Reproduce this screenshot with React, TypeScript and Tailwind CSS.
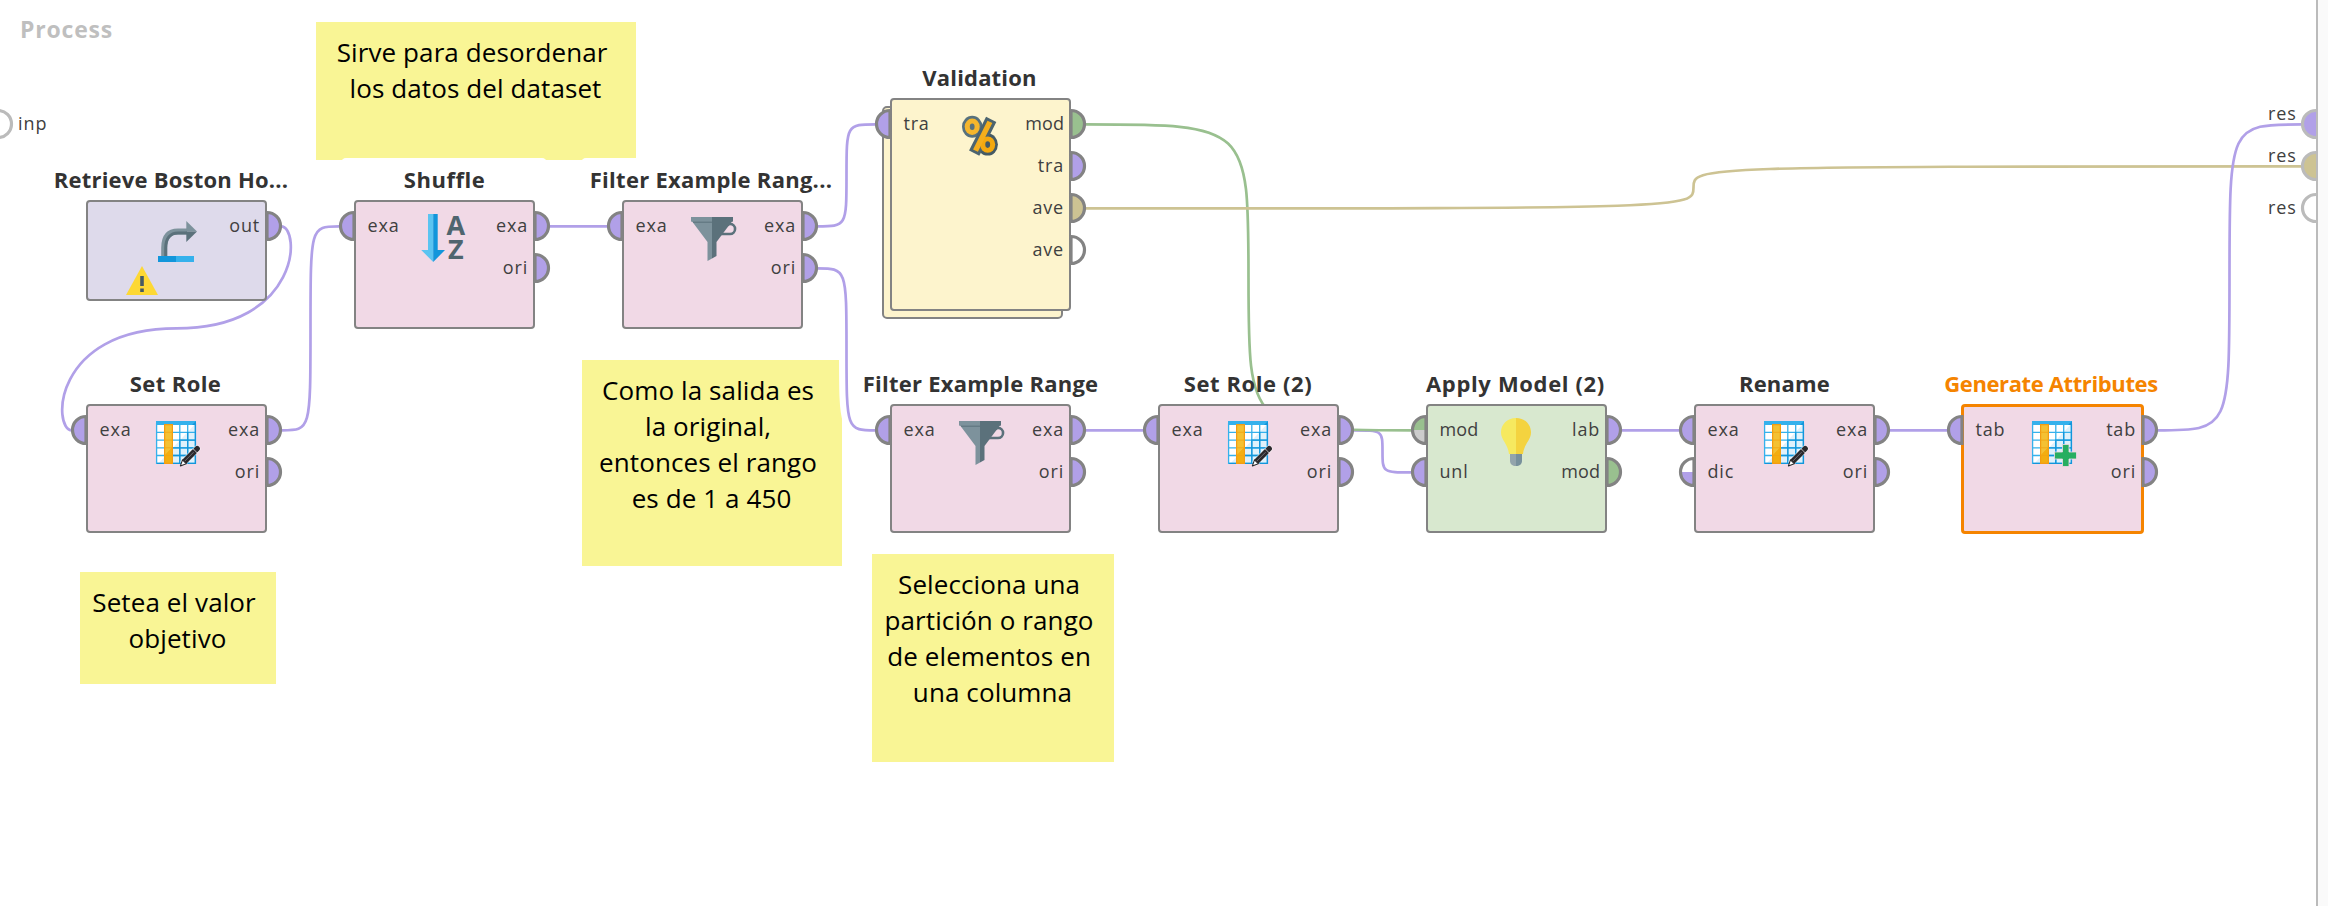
import React from "react";

type PortKind = "exa" | "mod" | "ave" | "none" | "modHalf" | "dicHalf";
type Port = { label: string; kind: PortKind };
type IconName = "retrieve" | "sort" | "funnel" | "percent" | "bulb" | "tableEdit" | "tableAdd";
type OperatorData = {
  title: string;
  titleShift: number;
  titleSpacing: number;
  x: number;
  y: number;
  height: number;
  fill: string;
  icon: IconName;
  inputs: Port[];
  outputs: Port[];
  selected?: boolean;
  stacked?: boolean;
};

const PURPLE = "#b1a0e8";
const GREEN = "#99c08f";
const KHAKI = "#cdc393";

const exa: Port = { label: "exa", kind: "exa" };
const ori: Port = { label: "ori", kind: "exa" };

const operators: OperatorData[] = [
  { title: "Retrieve Boston Ho...", titleShift: -5.5, titleSpacing: 0.22, x: 86, y: 200, height: 101, fill: "#dedaeb", icon: "retrieve", inputs: [], outputs: [{ label: "out", kind: "exa" }] },
  { title: "Shuffle", titleShift: 0, titleSpacing: 0.5, x: 354, y: 200, height: 129, fill: "#f1d9e6", icon: "sort", inputs: [exa], outputs: [exa, ori] },
  { title: "Filter Example Rang...", titleShift: -1.5, titleSpacing: 0.27, x: 622, y: 200, height: 129, fill: "#f1d9e6", icon: "funnel", inputs: [exa], outputs: [exa, ori] },
  { title: "Validation", titleShift: -1, titleSpacing: 0.17, x: 890, y: 98, height: 213, fill: "#fdf4cd", icon: "percent", inputs: [{ label: "tra", kind: "exa" }], outputs: [{ label: "mod", kind: "mod" }, { label: "tra", kind: "exa" }, { label: "ave", kind: "ave" }, { label: "ave", kind: "none" }], stacked: true },
  { title: "Set Role", titleShift: -1, titleSpacing: 0.4, x: 86, y: 404, height: 129, fill: "#f1d9e6", icon: "tableEdit", inputs: [exa], outputs: [exa, ori] },
  { title: "Filter Example Range", titleShift: 0, titleSpacing: 0.25, x: 890, y: 404, height: 129, fill: "#f1d9e6", icon: "funnel", inputs: [exa], outputs: [exa, ori] },
  { title: "Set Role (2)", titleShift: -0.5, titleSpacing: 0.6, x: 1158, y: 404, height: 129, fill: "#f1d9e6", icon: "tableEdit", inputs: [exa], outputs: [exa, ori] },
  { title: "Apply Model (2)", titleShift: -1, titleSpacing: 0.65, x: 1426, y: 404, height: 129, fill: "#d8e8cf", icon: "bulb", inputs: [{ label: "mod", kind: "modHalf" }, { label: "unl", kind: "exa" }], outputs: [{ label: "lab", kind: "exa" }, { label: "mod", kind: "mod" }] },
  { title: "Rename", titleShift: 0, titleSpacing: 0.2, x: 1694, y: 404, height: 129, fill: "#f1d9e6", icon: "tableEdit", inputs: [exa, { label: "dic", kind: "dicHalf" }], outputs: [exa, ori] },
  { title: "Generate Attributes", titleShift: -1.5, titleSpacing: -0.38, x: 1962, y: 404, height: 129, fill: "#f1d9e6", icon: "tableAdd", inputs: [{ label: "tab", kind: "exa" }], outputs: [{ label: "tab", kind: "exa" }, ori], selected: true },
];

const notes = [
  { x: 316, y: 22, w: 320, h: 138, lines: ["Sirve para desordenar ", "los datos del dataset"] },
  { x: 582, y: 360, w: 260, h: 206, lines: ["Como la salida es ", "la original, ", "entonces el rango ", "es de 1 a 450"] },
  { x: 80, y: 572, w: 196, h: 112, lines: ["Setea el valor ", "objetivo"] },
  { x: 872, y: 554, w: 242, h: 208, lines: ["Selecciona una ", "partición o rango ", "de elementos en ", "una columna"] },
];

function wire(x1: number, y1: number, x2: number, y2: number) {
  const cx = (x1 + x2) / 2;
  const cy = (y1 + y2) / 2;
  if (x2 > x1) return `M${x1} ${y1}C${cx} ${y1} ${cx} ${y1} ${cx} ${cy}C${cx} ${y2} ${cx} ${y2} ${x2} ${y2}`;
  return `M${x1} ${y1}C${x1 + 20} ${y1} ${x1 + 20} ${cy} ${cx} ${cy}C${x2 - 20} ${cy} ${x2 - 20} ${y2} ${x2} ${y2}`;
}

const wires = [
  { d: wire(281, 226.4, 72, 430.4), color: PURPLE },
  { d: wire(282, 430.4, 339, 226.4), color: PURPLE },
  { d: wire(549, 226.4, 608, 226.4), color: PURPLE },
  { d: wire(817, 226.4, 876, 124.4), color: PURPLE },
  { d: wire(817, 268.4, 876, 430.4), color: PURPLE },
  { d: wire(1085, 430.4, 1144, 430.4), color: PURPLE },
  { d: wire(1353, 430.4, 1412, 472.4), color: PURPLE },
  { d: wire(1621, 430.4, 1680, 430.4), color: PURPLE },
  { d: wire(1889, 430.4, 1948, 430.4), color: PURPLE },
  { d: wire(1085, 124.4, 1412, 430.4), color: GREEN },
  { d: wire(1085, 208.4, 2302, 166.4), color: KHAKI },
  { d: wire(2157, 430.4, 2302, 124.4), color: PURPLE },
];

const HALVES: Record<PortKind, [string, string]> = {
  exa: [PURPLE, PURPLE],
  mod: [GREEN, GREEN],
  ave: [KHAKI, KHAKI],
  none: ["#ffffff", "#ffffff"],
  modHalf: [GREEN, "#cccccc"],
  dicHalf: ["#ffffff", PURPLE],
};

function PortShape({ kind, side, stroke, open }: { kind: PortKind; side: "left" | "right"; stroke: string; open?: boolean }) {
  const [top, bottom] = HALVES[kind];
  return (
    <svg width="18" height="32" viewBox="0 0 18 32" className={side === "right" ? "block" : "block -scale-x-100"}>
      <path d="M2 2.5A13.5 13.5 0 0 1 15.5 16H2Z" fill={top} />
      <path d="M2 29.5A13.5 13.5 0 0 0 15.5 16H2Z" fill={bottom} />
      <path d={open ? "M1 2.5H2A13.5 13.5 0 0 1 2 29.5H1" : "M2 2.5A13.5 13.5 0 0 1 2 29.5Z"} fill="none" stroke={stroke} strokeWidth="3.2" />
    </svg>
  );
}

function TableGrid() {
  return (
    <>
      <rect x="4" y="3" width="40" height="43" fill="#fff" />
      <path d="M44 5V46H6Z" fill="#dff1fb" />
      <path d="M4.6 5V46M4 14.3H44M4 22.1H44M4 29.8H44M4 37.5H44M4 45.4H44M27.8 5V46M35.7 5V46M43.4 5V46" stroke="#35b1ec" strokeWidth="1.3" />
      <path d="M43.4 6V46M35.7 14V46M27.8 23V46M20 29.8H44M13 37.5H44M27 22.1H44M5 45.4H44" stroke="#1296db" strokeWidth="1.3" />
      <rect x="4" y="3" width="40" height="4" fill="#35b1ec" />
      <path d="M40 7L44 3V7Z" fill="#1296db" />
      <rect x="12" y="6" width="9" height="40" fill="#f39c12" />
      <path d="M13.2 7.2H19.8V30L13.2 37Z" fill="#f4c133" />
      <path d="M13.2 37L19.8 30V44.8H13.2Z" fill="#f3ae10" />
      <path d="M12 14.3H21M12 22.1H21M12 29.8H21M12 37.5H21" stroke="#f3a312" strokeWidth="0.8" />
    </>
  );
}

function Icon({ name }: { name: IconName }) {
  switch (name) {
    case "retrieve":
      return (
        <>
          <rect x="6" y="42" width="18" height="6" fill="#1296db" />
          <rect x="24" y="42" width="18" height="6" fill="#35b1ec" />
          <path d="M12.2 42V34C12.2 23 17 17.500 26 17.500H35" fill="none" stroke="#7d929c" strokeWidth="6" />
          <path d="M13.7 42V34C13.7 24 18.500 19 26 19H35" fill="none" stroke="#5b717b" strokeWidth="3" />
          <path d="M34.300 7L45 17.500H34.300Z" fill="#7d929c" />
          <path d="M34.300 28L45 17.500H34.300Z" fill="#5b717b" />
        </>
      );
    case "sort":
      return (
        <>
          <path d="M8 0H13.200V48L1.200 36H8Z" fill="#5bc4f1" />
          <path d="M13.200 0H17.700V36H25L13.200 48Z" fill="#1296db" />
        </>
      );
    case "funnel":
      return (
        <>
          <path d="M39.500 11.500Q40.500 9.900 42 9.900A5.050 5.050 0 0 1 42 20H33" fill="none" stroke="#5b717b" strokeWidth="2.600" />
          <path d="M3 3H24V44.500L19.500 47V28L4.500 8L3 7.500Z" fill="#7d929c" />
          <path d="M24 3H45V7.500L43.500 8L28.500 28V42L24 44.500Z" fill="#5b717b" />
          <path d="M5 8.200H24" stroke="#5b717b" strokeWidth="1" />
        </>
      );
    case "percent":
      return (
        <>
          <ellipse cx="16.200" cy="14.800" rx="10.200" ry="11" fill="#57717d" />
          <ellipse cx="31.700" cy="32.600" rx="10.200" ry="11" fill="#455a64" />
          <path d="M35.200 7.300L18.200 41.200" stroke="#4c646f" strokeWidth="11.500" />
          <ellipse cx="16.200" cy="14.800" rx="7.500" ry="8.200" fill="#f5b62c" />
          <ellipse cx="31.700" cy="32.600" rx="7.500" ry="8.200" fill="#f3a80f" />
          <path d="M33.900 9.900L19.500 38.600" stroke="#f4ae1c" strokeWidth="5.400" />
          <ellipse cx="16.200" cy="14.800" rx="2.400" ry="3.300" fill="#57717d" />
          <ellipse cx="31.700" cy="32.600" rx="2.400" ry="3.300" fill="#455a64" />
        </>
      );
    case "bulb":
      return (
        <>
          <path d="M24 0C15 0 9 6.500 9 14.500C9 22 16 26 17 36H24Z" fill="#f6e95f" />
          <path d="M24 0C33 0 39 6.500 39 14.500C39 22 32 26 31 36H24Z" fill="#f4d33f" />
          <path d="M18 36H24V48C20.500 48 18 46 18 43Z" fill="#93a4ac" />
          <path d="M24 36H30V43C30 46 27.500 48 24 48Z" fill="#78909c" />
        </>
      );
    case "tableEdit":
      return (
        <>
          <TableGrid />
          <path d="M32 44L45 30.800" stroke="#fff" strokeWidth="6.800" strokeLinecap="round" opacity="0.700" />
          <path d="M44 31.900L45.200 30.700" stroke="#2b292c" strokeWidth="5.400" strokeLinecap="round" />
          <path d="M32.300 43.800L42.700 33.200" stroke="#2b292c" strokeWidth="5.600" />
          <path d="M32.300 43.600L41.600 34.200" stroke="#77747a" strokeWidth="0.900" />
          <path d="M28.400 47.900L30.500 41.900L34.300 45.700Z" fill="#fff" stroke="#2b292c" strokeWidth="1.100" strokeLinejoin="round" />
          <path d="M41.300 30.900L45 34.700" stroke="#d8d5d9" strokeWidth="0.800" />
        </>
      );
    case "tableAdd":
      return (
        <>
          <TableGrid />
          <path d="M34.500 26.500H41V34H48.500V41H41V48.500H34.500V41H26.500V34H34.500Z" fill="#27ae60" stroke="#f1d9e6" strokeWidth="0.800" />
        </>
      );
  }
}

function PortLabels({ ports, align }: { ports: Port[]; align: "left" | "right" }) {
  return (
    <div className={align === "left" ? "flex flex-col items-start" : "flex flex-col items-end"}>
      {ports.map((p, i) => (
        <span
          key={i}
          className={
            p.label === "mod"
              ? "h-[42px] text-[18px] leading-[42px] tracking-[0.1px] text-[#404040]"
              : "h-[42px] text-[18px] leading-[42px] tracking-[0.8px] text-[#404040]"
          }
        >
          {p.label}
        </span>
      ))}
    </div>
  );
}

function Operator({ op }: { op: OperatorData }) {
  return (
    <div className="absolute w-[181px]" style={{ left: op.x, top: op.y, height: op.height }}>
      {op.stacked && (
        <div className="absolute top-[8px] -left-[8px] h-full w-full rounded-[5px] border-2 border-[#838383]" style={{ backgroundColor: op.fill }} />
      )}
      <div className="absolute -inset-x-[50px] -top-[42px] flex h-[42px] justify-center">
        <h2
          className={
            op.selected
              ? "relative mt-[3px] text-[22px] leading-[36px] font-bold whitespace-pre text-[#f58400]"
              : "relative mt-[3px] text-[22px] leading-[36px] font-bold whitespace-pre text-[#333333]"
          }
          style={{ left: op.titleShift, letterSpacing: op.titleSpacing }}
        >
          {op.title}
        </h2>
      </div>
      <div
        className={
          op.selected
            ? "absolute -inset-x-[1px] top-0 -bottom-[1px] rounded-[4px] border-[3px] border-[#f58400]"
            : "absolute inset-0 rounded-[4px] border-2 border-[#838383]"
        }
        style={{ backgroundColor: op.fill }}
      />
      <div className="relative flex justify-between pt-[4px] pr-[7px] pl-[13.500px]">
        <PortLabels ports={op.inputs} align="left" />
        <PortLabels ports={op.outputs} align="right" />
      </div>
      <svg width="50" height="50" viewBox="0 0 50 50" className="absolute top-[14px] left-[66px] overflow-visible" fill="none">
        <Icon name={op.icon} />
      </svg>
      {op.icon === "sort" && (
        <div className="absolute top-[13px] left-[92.500px] flex flex-col items-center text-[27px] leading-[24px] font-bold text-[#4f656f]">
          <span>A</span>
          <span>Z</span>
        </div>
      )}
      {op.icon === "retrieve" && (
        <svg width="34" height="32" viewBox="0 0 34 32" className="absolute top-[65px] left-[39px]">
          <path d="M17 1L33 30H1Z" fill="#fdd835" />
          <path d="M17 11V21M17 23.500V27" stroke="#455a64" strokeWidth="3.600" />
        </svg>
      )}
      {op.inputs.map((p, i) => (
        <div key={i} className="absolute -left-[15.700px]" style={{ top: 10.2 + i * 42 }}>
          <PortShape kind={p.kind} side="left" stroke="#838383" />
        </div>
      ))}
      {op.outputs.map((p, i) => (
        <div key={i} className="absolute -right-[15.700px]" style={{ top: 10.2 + i * 42 }}>
          <PortShape kind={p.kind} side="right" stroke="#838383" />
        </div>
      ))}
    </div>
  );
}

export default function App() {
  return (
    <main className="relative h-[906px] w-[2328px] overflow-hidden bg-white font-['Open_Sans',sans-serif]">
      <h1 className="absolute top-[11px] left-[20px] text-[23px] leading-[36px] font-bold tracking-[0.800px] text-[#bfbfbf]">Process</h1>

      {notes.map((n) => (
        <div key={n.lines[0]} className="absolute bg-[#f9f595] pt-[12px] pr-[1px]" style={{ left: n.x, top: n.y, width: n.w, height: n.h }}>
          {n.lines.map((line) => (
            <p key={line} className="text-center text-[26px] leading-[36px] tracking-[0.100px] whitespace-pre text-black">
              {line}
            </p>
          ))}
        </div>
      ))}

      <svg width="2328" height="906" className="absolute inset-0" fill="none">
        <rect x="341" y="158" width="206" height="42" rx="5" fill="#fff" />
        <rect x="581" y="158" width="264" height="42" rx="5" fill="#fff" />
        <path d={wire(817, 268.4, 876, 430.4)} stroke="#fff" strokeWidth="15" />
        {wires.map((w) => (
          <path key={w.d} d={w.d} stroke={w.color} strokeWidth="2.700" />
        ))}
      </svg>

      {operators.map((op, i) => (
        <Operator key={i} op={op} />
      ))}

      <div className="absolute top-[108.200px] -left-[4.500px]">
        <PortShape kind="none" side="right" stroke="#bbbbbb" open />
      </div>
      <span className="absolute top-[102px] left-[18px] text-[18px] leading-[42px] tracking-[0.900px] text-[#404040]">inp</span>

      {[
        { kind: "exa" as PortKind, y: 124.2, ly: 113 },
        { kind: "ave" as PortKind, y: 166.2, ly: 155 },
        { kind: "none" as PortKind, y: 208.2, ly: 207 },
      ].map((r) => (
        <React.Fragment key={r.y}>
          <span className="absolute left-[2268px] text-[18px] leading-[42px] tracking-[0.900px] text-[#404040]" style={{ top: r.ly - 21 }}>
            res
          </span>
          <div className="absolute left-[2300.400px]" style={{ top: r.y - 16 }}>
            <PortShape kind={r.kind} side="left" stroke="#bbbbbb" open />
          </div>
        </React.Fragment>
      ))}
      <div className="absolute top-0 right-0 h-full w-[12px] border-l-2 border-[#bbbbbb] bg-[#fafafa]" />
    </main>
  );
}
